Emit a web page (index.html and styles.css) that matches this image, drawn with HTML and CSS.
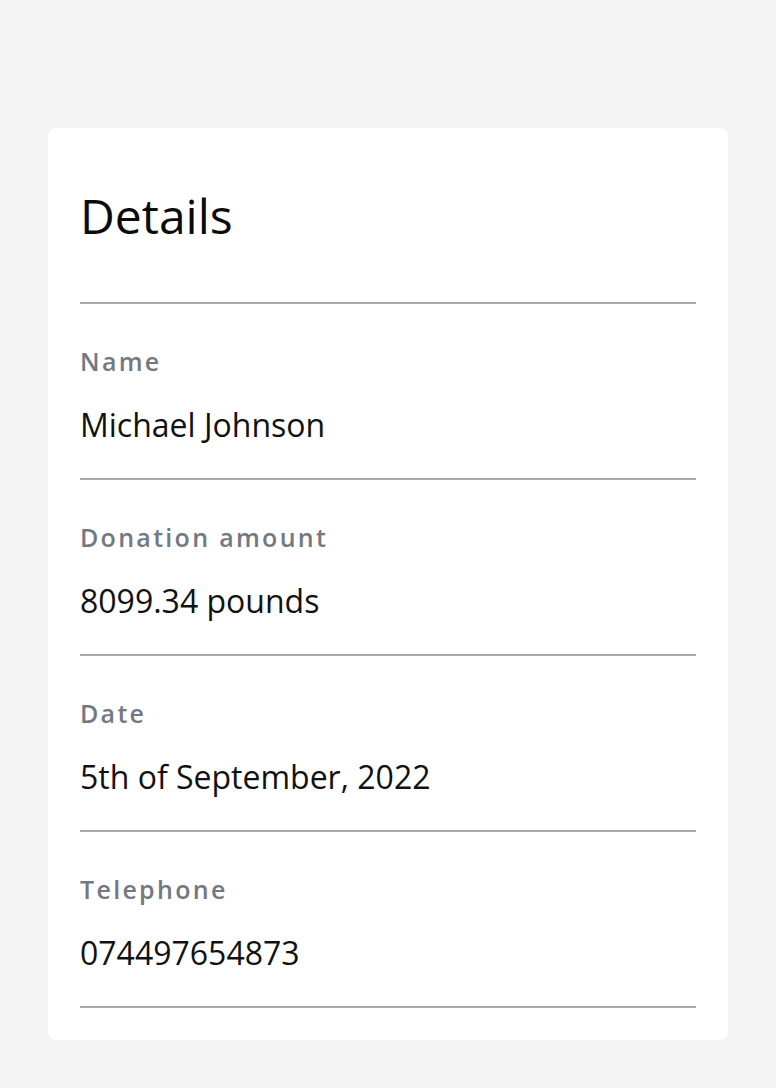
FILE: index.html
```html
<!DOCTYPE html>
<html lang="en">
<head>
<meta charset="utf-8">
<title>Details</title>
<link rel="stylesheet" href="styles.css">
</head>
<body>
<main class="card">
  <h1 class="title">Details</h1>
  <dl class="list">
    <div class="row">
      <dt class="label">Name</dt>
      <dd class="value">Michael Johnson</dd>
    </div>
    <div class="row">
      <dt class="label">Donation amount</dt>
      <dd class="value">8099.34 pounds</dd>
    </div>
    <div class="row">
      <dt class="label">Date</dt>
      <dd class="value">5th of September, 2022</dd>
    </div>
    <div class="row">
      <dt class="label">Telephone</dt>
      <dd class="value">074497654873</dd>
    </div>
  </dl>
</main>
</body>
</html>
```
FILE: styles.css
```css
html, body {
  margin: 0;
  padding: 0;
}
body {
  background: #f3f3f3;
  font-family: "Open Sans", "Noto Sans", sans-serif;
}
.card {
  margin: 128px 48px 0;
  background: #ffffff;
  border-radius: 8px;
  padding: 59px 32px 32px;
}
.title {
  margin: 0 0 57px;
  font-size: 48px;
  line-height: 58px;
  font-weight: 400;
  color: #0b0b0b;
}
.list {
  margin: 0;
  border-bottom: 2px solid #a6a9ae;
}
.row {
  border-top: 2px solid #a6a9ae;
  padding: 41px 0 31px;
  display: flex;
  flex-direction: column;
  gap: 26px;
}
.label {
  font-size: 25px;
  line-height: 32px;
  font-weight: 600;
  color: #737883;
  letter-spacing: 2.3px;
}
.value {
  margin: 0;
  font-size: 32px;
  line-height: 44px;
  color: #111111;
}
```
